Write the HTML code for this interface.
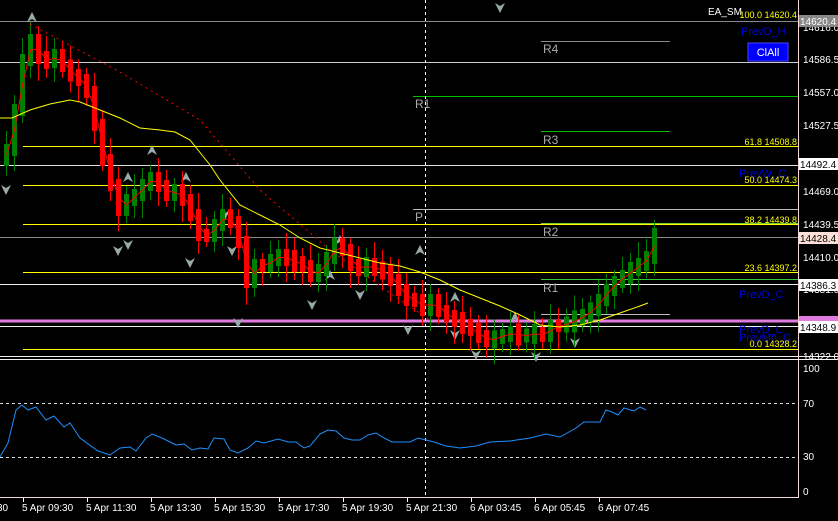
<!DOCTYPE html>
<html><head><meta charset="utf-8"><style>
html,body{margin:0;padding:0;background:#000;width:838px;height:521px;overflow:hidden}
svg{display:block;font-family:"Liberation Sans",sans-serif}
</style></head><body>
<svg id="s" width="838" height="521" viewBox="0 0 838 521" xmlns="http://www.w3.org/2000/svg">
<rect width="838" height="521" fill="#000"/>
<g stroke-width="1" shape-rendering="crispEdges">
<line x1="0" y1="21.5" x2="798" y2="21.5" stroke="#888"/>
<line x1="0" y1="62.5" x2="798" y2="62.5" stroke="#ccc"/>
<line x1="413" y1="96.5" x2="798" y2="96.5" stroke="#00c000"/>
<line x1="541" y1="41.5" x2="670" y2="41.5" stroke="#888"/>
<line x1="541" y1="131.5" x2="670" y2="131.5" stroke="#00c000"/>
<line x1="23" y1="146.5" x2="798" y2="146.5" stroke="#ff0"/>
<line x1="0" y1="165.5" x2="798" y2="165.5" stroke="#ddd"/>
<line x1="23" y1="185.5" x2="798" y2="185.5" stroke="#ff0"/>
<line x1="413" y1="209.5" x2="798" y2="209.5" stroke="#bbb"/>
<line x1="23" y1="224.5" x2="798" y2="224.5" stroke="#ff0"/>
<line x1="541" y1="223.5" x2="798" y2="223.5" stroke="#7c3"/>
<line x1="0" y1="237.5" x2="798" y2="237.5" stroke="#888"/>
<line x1="23" y1="272.5" x2="798" y2="272.5" stroke="#ff0"/>
<line x1="541" y1="279.5" x2="798" y2="279.5" stroke="#3c3"/>
<line x1="0" y1="284.5" x2="798" y2="284.5" stroke="#eee"/>
<line x1="541" y1="314.5" x2="670" y2="314.5" stroke="#bbb"/>
<line x1="0" y1="321" x2="798" y2="321" stroke="#e07be0" stroke-width="3"/>
<line x1="0" y1="326.5" x2="798" y2="326.5" stroke="#eee"/>
<line x1="23" y1="349.5" x2="798" y2="349.5" stroke="#ff0"/>
<line x1="0" y1="356.5" x2="838" y2="356.5" stroke="#eee"/>
<line x1="0" y1="359.5" x2="838" y2="359.5" stroke="#eee"/>
<line x1="798.5" y1="0" x2="798.5" y2="498" stroke="#f4d8d8"/>
<line x1="0" y1="497.5" x2="798" y2="497.5" stroke="#f4d8d8"/>
<line x1="425.5" y1="0" x2="425.5" y2="498" stroke="#fff" stroke-dasharray="3,3"/>
<line x1="0" y1="403.5" x2="798" y2="403.5" stroke="#ddd" stroke-dasharray="3,3"/>
<line x1="0" y1="457.5" x2="798" y2="457.5" stroke="#ddd" stroke-dasharray="3,3"/>
</g>
<g id="ar"></g>
<g id="cd"></g>
<polyline fill="none" stroke="#ff0" stroke-width="1" points="0,118 12,118 30,110 50,104 70,100 80,102 100,110 120,118 140,128 160,130 175,132 190,140 210,165 220,180 240,205 260,215 280,225 300,238 320,248 340,253 360,258 380,263 400,266 420,272 440,280 460,290 480,298 500,306 520,315 540,325 560,327 580,325 600,320 620,313 640,306 648,303"/>
<polyline fill="none" stroke="#f00" stroke-width="1" stroke-dasharray="2,4" points="30,24 120,72 200,120 260,190 330,250 400,300 430,320"/>
<text x="415" y="108" fill="#aaa" font-size="12">R1</text>
<text x="543" y="53" fill="#aaa" font-size="12">R4</text>
<text x="543" y="144" fill="#aaa" font-size="12">R3</text>
<text x="415" y="221" fill="#aaa" font-size="12">P</text>
<text x="543" y="236" fill="#aaa" font-size="12">R2</text>
<text x="543" y="292" fill="#aaa" font-size="12">R1</text>
<g font-size="11" fill="#0000e0">
<text x="741" y="35">PrevD_H</text>
<text x="739" y="177">PrevW_C</text>
<text x="739" y="298">PrevD_C</text>
<text x="739" y="333">PrevD_L</text>
<text x="739" y="341">PrevMn_C</text>
</g>
<text x="708" y="15" fill="#fff" font-size="10">EA_SM</text>
<g font-size="9" fill="#ff0" text-anchor="end">
<text x="797" y="18">100.0 14620.4</text>
<text x="797" y="145">61.8 14508.8</text>
<text x="797" y="183">50.0 14474.3</text>
<text x="797" y="223">38.2 14439.8</text>
<text x="797" y="271">23.6 14397.2</text>
<text x="797" y="347">0.0 14328.2</text>
</g>
<rect x="748" y="43" width="40" height="18" fill="#0000ff" stroke="#4444ff"/>
<text x="768" y="56" fill="#fff" font-size="11" text-anchor="middle">ClAll</text>
<g font-size="10" fill="#fff">
<text x="803" y="31">14616.0</text>
<text x="803" y="63">14586.5</text>
<text x="803" y="96">14557.0</text>
<text x="803" y="129">14527.5</text>
<text x="803" y="195">14469.0</text>
<text x="803" y="228">14439.5</text>
<text x="803" y="261">14410.0</text>
<text x="803" y="293">14381.0</text>
<text x="803" y="360">14322.0</text>
<text x="803" y="372">100</text>
<text x="803" y="407">70</text>
<text x="803" y="460">30</text>
<text x="803" y="495">0</text>
</g>
<rect x="799" y="15" width="39" height="12" fill="#888"/><text x="800" y="25" font-size="10" fill="#fff">14620.4</text>
<rect x="799" y="158" width="39" height="12" fill="#fff"/><text x="800" y="168" font-size="10" fill="#000">14492.4</text>
<rect x="799" y="232" width="39" height="12" fill="#fde0d8"/><text x="800" y="242" font-size="10" fill="#000">14428.4</text>
<rect x="799" y="279" width="39" height="12" fill="#fff"/><text x="800" y="289" font-size="10" fill="#000">14386.3</text>
<rect x="799" y="316" width="39" height="5" fill="#e07be0"/>
<rect x="799" y="321" width="39" height="12" fill="#fff"/><text x="800" y="331" font-size="10" fill="#000">14348.9</text>
<polyline fill="none" stroke="#1e90ff" stroke-width="1" points="0,457 8,443 16,410 22,405 28,410 36,407 46,420 54,416 64,427 70,423 80,438 98,451 110,455 120,448 130,447 136,451 146,438 152,434 162,438 176,445 184,444 192,450 200,448 208,449 214,438 224,439 230,450 238,453 248,448 256,441 264,443 278,439 288,442 296,442 304,448 310,446 320,434 328,430 336,431 344,438 352,440 360,440 368,435 376,433 384,438 392,442 410,442 418,438 426,440 434,442 446,446 460,448 476,446 490,442 510,441 530,438 546,434 560,437 576,428 584,422 600,422 606,410 612,412 618,415 624,408 634,411 640,407 646,410"/>
<g font-size="10" fill="#fff">
<text x="-3" y="511">30</text>
<text x="22" y="511">5 Apr 09:30</text>
<text x="86" y="511">5 Apr 11:30</text>
<text x="150" y="511">5 Apr 13:30</text>
<text x="214" y="511">5 Apr 15:30</text>
<text x="278" y="511">5 Apr 17:30</text>
<text x="342" y="511">5 Apr 19:30</text>
<text x="406" y="511">5 Apr 21:30</text>
<text x="470" y="511">6 Apr 03:45</text>
<text x="534" y="511">6 Apr 05:45</text>
<text x="598" y="511">6 Apr 07:45</text>
</g>
<g stroke="#fff" shape-rendering="crispEdges">
<line x1="23.5" y1="498" x2="23.5" y2="502"/><line x1="87.5" y1="498" x2="87.5" y2="502"/><line x1="151.5" y1="498" x2="151.5" y2="502"/><line x1="215.5" y1="498" x2="215.5" y2="502"/><line x1="279.5" y1="498" x2="279.5" y2="502"/><line x1="343.5" y1="498" x2="343.5" y2="502"/><line x1="407.5" y1="498" x2="407.5" y2="502"/><line x1="471.5" y1="498" x2="471.5" y2="502"/><line x1="535.5" y1="498" x2="535.5" y2="502"/><line x1="599.5" y1="498" x2="599.5" y2="502"/>
</g>
</svg>
<script>
var c=[160,150,110,60,40,58,62,55,66,75,80,92,125,160,185,210,200,195,185,178,186,195,190,200,215,235,236,225,215,222,242,282,265,266,260,255,260,262,266,276,270,258,244,250,265,270,264,270,271,280,290,300,300,310,300,311,316,321,325,330,336,341,338,335,333,336,335,333,336,326,326,323,320,315,310,300,290,282,276,270,264,258,234];
var g=document.getElementById('cd'),h='',red=[];
for(var i=1;i<c.length;i++){var x=4+(i-1)*8,o=c[i-1],cl=c[i];var up=cl<o;var col=up?'#008000':'#ff0000';
var m=(o+cl)/2,hh=Math.max(Math.abs(cl-o)/2+6,5+(i*3%7));var t=m-hh,b=m+hh;
var hi=t-6-(i*7%11),lo=b+5+(i*5%13);
h+='<line x1="'+(x+2.5)+'" y1="'+hi+'" x2="'+(x+2.5)+'" y2="'+lo+'" stroke="'+col+'"/>';
h+='<rect x="'+x+'" y="'+t+'" width="5" height="'+(b-t)+'" fill="'+col+'"/>';red.push((x+2.5)+','+m);}
h+='<polyline fill="none" stroke="#f00" points="'+red.join(' ')+'"/>';
g.innerHTML=h;
var a=[[32,12,0],[500,3,1],[6,185,1],[128,172,0],[152,145,0],[186,172,0],[128,240,1],[118,246,1],[190,258,1],[238,318,1],[232,246,1],[225,210,1],[340,235,0],[312,300,1],[360,290,1],[420,245,0],[408,325,1],[455,330,1],[476,350,1],[536,352,1],[575,338,1],[455,292,0],[515,312,0],[330,270,0]];
var s='';a.forEach(function(p){var x=p[0],y=p[1];if(p[2]==0)s+='<path d="M'+x+','+y+' l5,10 l-5,-3 l-5,3z" fill="#9aa"/>';else s+='<path d="M'+x+','+(y+10)+' l5,-10 l-5,3 l-5,-3z" fill="#9aa"/>';});
document.getElementById('ar').innerHTML=s;
</script>
</body></html>
